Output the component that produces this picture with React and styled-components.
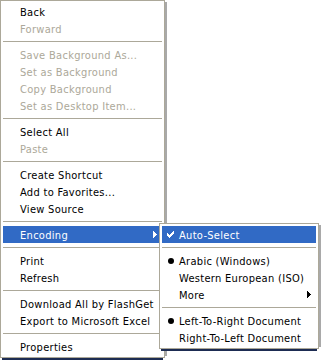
import React from "react";
import styled, { createGlobalStyle } from "styled-components";

const Global = createGlobalStyle`
  html, body { margin: 0; padding: 0; background: #ffffff; }
  body { width: 322px; height: 360px; overflow: hidden; }
`;

const Stage = styled.div`
  position: relative;
  width: 322px;
  height: 360px;
  font-family: "DejaVu Sans Condensed", "DejaVu Sans", sans-serif;
  font-size: 11px;
  letter-spacing: 0.3px;
`;

const Menu = styled.div`
  position: ${(p) => (p.$sub ? "absolute" : "relative")};
  left: ${(p) => (p.$sub ? "159px" : "auto")};
  top: ${(p) => (p.$sub ? "223px" : "auto")};
  width: ${(p) => p.$width}px;
  box-sizing: border-box;
  background: #ffffff;
  border: 1px solid #aca899;
  padding: 2px;
  display: flex;
  flex-direction: column;
  box-shadow: 4px 0 0 -2px #a9a9a9, 0 4px 0 -2px #1d2c52;
`;

const Item = styled.div`
  position: relative;
  height: 17px;
  box-sizing: border-box;
  padding-top: 2px;
  line-height: 15px;
  padding-left: 17px;
  color: ${(p) => (p.$active ? "#ffffff" : p.$disabled ? "#aca899" : "#000000")};
  background: ${(p) => (p.$active ? "#316ac5" : "transparent")};
  white-space: nowrap;
`;

const Mark = styled.span`
  position: absolute;
  left: 4px;
  top: 0;
  height: 17px;
  display: flex;
  align-items: center;
`;

const Arrow = styled.span`
  position: absolute;
  right: 5px;
  top: 0;
  height: 17px;
  display: flex;
  align-items: center;
`;

const Sep = styled.div`
  height: 9px;
  display: flex;
  align-items: center;
  &::before {
    content: "";
    display: block;
    width: 100%;
    height: 1px;
    background: #aca899;
  }
`;

const Check = ({ color }) => (
  <svg width="7" height="7" viewBox="0 0 7 7" shapeRendering="crispEdges" style={{ marginLeft: 1 }}>
    <path
      fill={color}
      d="M6 0h1v3h-1zM5 1h1v3h-1zM4 2h1v3h-1zM3 3h1v3h-1zM2 4h1v3h-1zM1 3h1v3h-1zM0 2h1v3h-1z"
    />
  </svg>
);

const Bullet = ({ color }) => (
  <svg width="6" height="6" viewBox="0 0 6 6" style={{ marginLeft: 2 }}>
    <circle cx="3" cy="3" r="3" fill={color} />
  </svg>
);

const Tri = ({ color }) => (
  <svg width="4" height="7" viewBox="0 0 4 7" shapeRendering="crispEdges">
    <path fill={color} d="M0 0h1v7h-1zM1 1h1v5h-1zM2 2h1v3h-1zM3 3h1v1h-1z" />
  </svg>
);

const mainItems = [
  { t: "Back" },
  { t: "Forward", d: true },
  "-",
  { t: "Save Background As...", d: true },
  { t: "Set as Background", d: true },
  { t: "Copy Background", d: true },
  { t: "Set as Desktop Item...", d: true },
  "-",
  { t: "Select All" },
  { t: "Paste", d: true },
  "-",
  { t: "Create Shortcut" },
  { t: "Add to Favorites..." },
  { t: "View Source" },
  "-",
  { t: "Encoding", a: true, sub: true },
  "-",
  { t: "Print" },
  { t: "Refresh" },
  "-",
  { t: "Download All by FlashGet" },
  { t: "Export to Microsoft Excel" },
  "-",
  { t: "Properties" },
];

const subItems = [
  { t: "Auto-Select", a: true, m: "check" },
  "-",
  { t: "Arabic (Windows)", m: "bullet" },
  { t: "Western European (ISO)" },
  { t: "More", sub: true },
  "-",
  { t: "Left-To-Right Document", m: "bullet" },
  { t: "Right-To-Left Document" },
];

const renderItems = (items) =>
  items.map((it, i) => {
    if (it === "-") return <Sep key={i} />;
    const color = it.a ? "#ffffff" : "#000000";
    return (
      <Item key={i} $active={it.a} $disabled={it.d}>
        {it.m && (
          <Mark>{it.m === "check" ? <Check color={color} /> : <Bullet color={color} />}</Mark>
        )}
        {it.t}
        {it.sub && (
          <Arrow>
            <Tri color={color} />
          </Arrow>
        )}
      </Item>
    );
  });

export default function App() {
  return (
    <Stage>
      <Global />
      <Menu $width={165}>{renderItems(mainItems)}</Menu>
      <Menu $sub $width={160}>{renderItems(subItems)}</Menu>
    </Stage>
  );
}
